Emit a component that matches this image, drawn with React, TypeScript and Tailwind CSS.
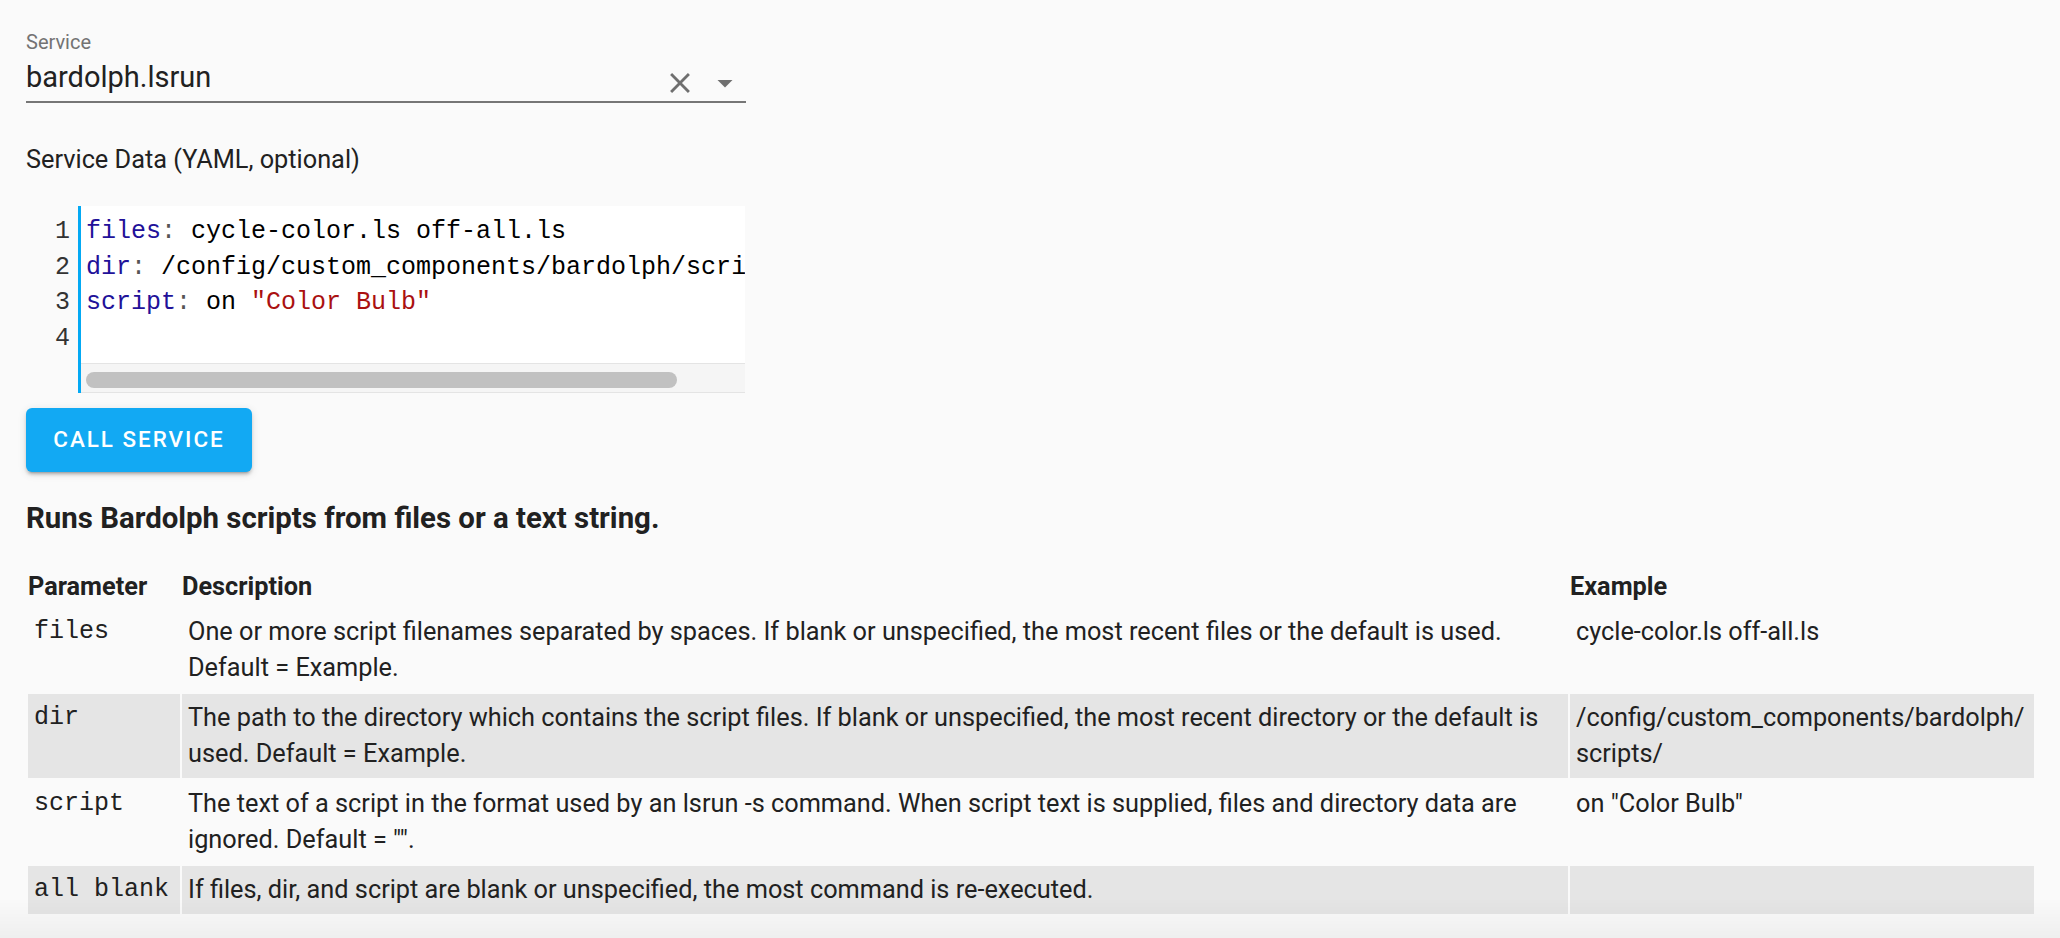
import React from "react";

const Key = ({ children }: { children: React.ReactNode }) => (
  <span className="text-[#221199]">{children}</span>
);
const Colon = () => <span className="text-[#555555]">:</span>;

function CodeEditor() {
  return (
    <div className="mt-[28px] flex w-[719px] font-['Liberation_Mono',monospace] text-[25px]">
      <div className="w-[55px] shrink-0 border-r-[3px] border-[#03a9f4] pr-[8px] pt-[8px] text-right leading-[35.7px] text-[#333333]">
        <div>1</div>
        <div>2</div>
        <div>3</div>
        <div>4</div>
      </div>
      <div className="flex min-w-0 flex-1 flex-col">
        <div className="overflow-hidden whitespace-pre bg-white pb-[6px] pl-[5px] pt-[8px] leading-[35.7px] text-black">
          <div>
            <Key>files</Key>
            <Colon /> cycle-color.ls off-all.ls
          </div>
          <div>
            <Key>dir</Key>
            <Colon /> /config/custom_components/bardolph/scripts/
          </div>
          <div>
            <Key>script</Key>
            <Colon /> on <span className="text-[#aa1111]">"Color Bulb"</span>
          </div>
          <div>&nbsp;</div>
        </div>
        <div className="h-[30px] border-y border-[#e4e4e4] bg-[#f5f5f5] pl-[5px] pt-[8px]">
          <div className="h-[16px] w-[591px] rounded-full bg-[#c1c1c1]" />
        </div>
      </div>
    </div>
  );
}

const rows: { p: string; d: string; e: React.ReactNode; gray: boolean }[] = [
  {
    p: "files",
    d: "One or more script filenames separated by spaces. If blank or unspecified, the most recent files or the default is used. Default = Example.",
    e: "cycle-color.ls off-all.ls",
    gray: false,
  },
  {
    p: "dir",
    d: "The path to the directory which contains the script files. If blank or unspecified, the most recent directory or the default is used. Default = Example.",
    e: (
      <>
        /config/custom_components/bardolph/
        <wbr />
        scripts/
      </>
    ),
    gray: true,
  },
  {
    p: "script",
    d: 'The text of a script in the format used by an lsrun -s command. When script text is supplied, files and directory data are ignored. Default = "".',
    e: 'on "Color Bulb"',
    gray: false,
  },
  {
    p: "all blank",
    d: "If files, dir, and script are blank or unspecified, the most command is re-executed.",
    e: "",
    gray: true,
  },
];

export default function App() {
  return (
    <div className="relative min-h-screen w-full overflow-hidden bg-[#fafafa] font-['Roboto',sans-serif] text-[#212121]">
      <div className="px-[26px] pb-[24px] pt-[32px]">
        {/* Service picker */}
        <div className="w-[720px]">
          <div className="text-[20px] leading-[20px] text-[#737373]">Service</div>
          <div className="mt-[8px] flex h-[34px] items-center">
            <div className="flex-1 text-[29px] leading-[34px] text-[#212121]">bardolph.lsrun</div>
            <svg className="mt-[12px] h-[34px] w-[34px] shrink-0" viewBox="0 0 24 24" fill="#6f6f6f">
              <path d="M19 6.41L17.59 5 12 10.59 6.41 5 5 6.41 10.59 12 5 17.59 6.41 19 12 13.41 17.59 19 19 17.59 13.41 12z" />
            </svg>
            <svg className="ml-[10px] mr-[3px] mt-[12px] h-[36px] w-[36px] shrink-0" viewBox="0 0 24 24" fill="#6f6f6f">
              <path d="M7 10l5 5 5-5z" />
            </svg>
          </div>
          <div className="mt-[7px] h-[2px] bg-[#767676]" />
        </div>

        {/* Service data label */}
        <div className="mt-[39px] text-[25.3px] leading-[36px] text-[#212121]">Service Data (YAML, optional)</div>

        <CodeEditor />

        <button className="mt-[15px] flex h-[64px] w-[226px] items-center justify-center rounded-[6px] bg-[#12a9f3] text-[22.4px] font-medium uppercase tracking-[2px] text-white shadow-[0_4px_2px_-3px_rgba(0,0,0,0.2),0_3px_3px_0_rgba(0,0,0,0.14),0_2px_8px_0_rgba(0,0,0,0.12)]">
          Call Service
        </button>

        <h3 className="mt-[28px] text-[29.4px] font-bold leading-[36px] text-[#212121]">
          Runs Bardolph scripts from files or a text string.
        </h3>

        <table className="mt-[25px] w-[2010px] table-fixed border-separate border-spacing-[2px] text-[25.3px] leading-[36px]">
          <colgroup>
            <col className="w-[152px]" />
            <col className="w-[1386px]" />
            <col className="w-[464px]" />
          </colgroup>
          <thead>
            <tr>
              <th className="pb-[1px] pt-[6px] text-left font-bold">Parameter</th>
              <th className="pb-[1px] pt-[6px] text-left font-bold">Description</th>
              <th className="pb-[1px] pt-[6px] text-left font-bold">Example</th>
            </tr>
          </thead>
          <tbody>
            {rows.map((r) => (
              <tr key={r.p}>
                <td
                  className={`whitespace-nowrap px-[6px] py-[6px] align-top font-['Liberation_Mono',monospace] text-[25px] ${
                    r.gray ? "bg-[#e5e5e5]" : ""
                  }`}
                >
                  {r.p}
                </td>
                <td className={`px-[6px] py-[6px] align-top ${r.gray ? "bg-[#e5e5e5]" : ""}`}>{r.d}</td>
                <td className={`px-[6px] py-[6px] align-top ${r.gray ? "bg-[#e5e5e5]" : ""}`}>{r.e}</td>
              </tr>
            ))}
          </tbody>
        </table>
      </div>
      <div className="pointer-events-none fixed inset-x-0 bottom-0 h-[40px] bg-linear-to-b from-transparent to-black/[0.045]" />
    </div>
  );
}
